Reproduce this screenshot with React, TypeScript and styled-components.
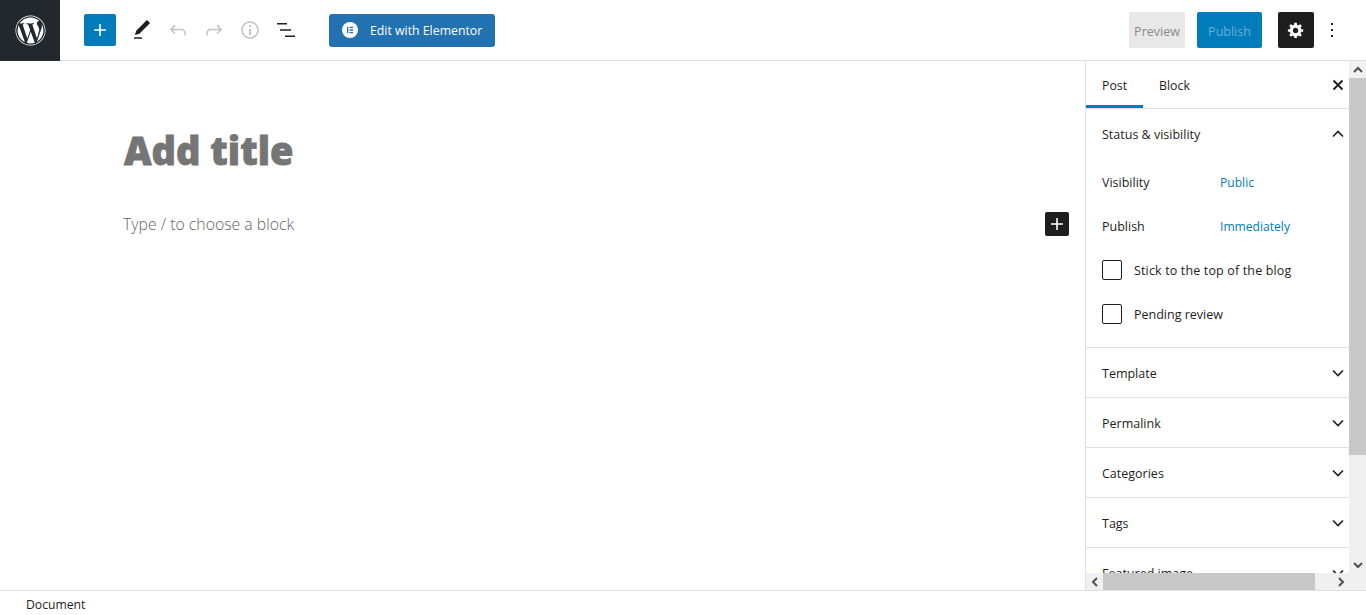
import React from "react";
import styled, { createGlobalStyle } from "styled-components";
import { FaWordpress } from "react-icons/fa";

const GlobalStyle = createGlobalStyle`
  html, body {
    margin: 0;
    height: 100%;
    overflow: hidden;
    background: #fff;
  }
  body {
    font-family: "Open Sans", "Noto Sans", sans-serif;
    font-size: 12.5px;
    color: #1e1e1e;
  }
`;

const Page = styled.div`
  display: flex;
  flex-direction: column;
  height: 615px;
`;

const Header = styled.header`
  display: flex;
  align-items: center;
  height: 60px;
  flex: none;
  border-bottom: 1px solid #e0e0e0;
`;

const LogoBox = styled.div`
  display: flex;
  align-items: center;
  justify-content: center;
  width: 60px;
  height: 61px;
  margin-bottom: -1px;
  background: #23282d;
  color: #fff;
`;

const Inserter = styled.button`
  display: flex;
  align-items: center;
  justify-content: center;
  width: 32px;
  height: 32px;
  margin: 0 8px 0 24px;
  padding: 0;
  border: 0;
  border-radius: 2px;
  background: #007cba;
  color: #fff;
`;

const ToolIcon = styled.div<{ $muted?: boolean }>`
  display: flex;
  align-items: center;
  justify-content: center;
  width: 36px;
  height: 36px;
  color: ${(p) => (p.$muted ? "#c4c4c4" : "#1e1e1e")};
`;

const ElementorButton = styled.button`
  display: flex;
  align-items: center;
  gap: 12px;
  width: 166px;
  height: 33px;
  margin-left: 25px;
  padding: 0 0 0 13px;
  border: 0;
  border-radius: 3px;
  background: #2271b1;
  color: #fff;
  font: inherit;
  font-size: 12.3px;
`;

const ElementorLabel = styled.span`
  padding-top: 1px;
`;

const HeaderRight = styled.div`
  display: flex;
  align-items: center;
  margin-left: auto;
  padding-right: 16px;
`;

const PreviewButton = styled.div`
  display: flex;
  align-items: center;
  justify-content: center;
  box-sizing: border-box;
  width: 56px;
  height: 36px;
  margin-right: 12px;
  padding-top: 2px;
  border-radius: 2px;
  background: #e8e8e8;
  color: #8a8a8a;
`;

const PublishButton = styled.div`
  display: flex;
  align-items: center;
  justify-content: center;
  box-sizing: border-box;
  width: 65px;
  height: 36px;
  margin-right: 16px;
  padding-top: 2px;
  border-radius: 2px;
  background: #007cba;
  color: #66b0d6;
`;

const SettingsButton = styled.div`
  display: flex;
  align-items: center;
  justify-content: center;
  width: 36px;
  height: 36px;
  border-radius: 2px;
  background: #1e1e1e;
  color: #fff;
`;

const Main = styled.div`
  display: flex;
  flex: none;
  height: 529px;
`;

const Editor = styled.main`
  flex: 1;
  min-width: 0;
  padding: 61px 16px 0 123px;
`;

const TitleField = styled.h1`
  margin: 0 0 0 1px;
  font-size: 38px;
  font-weight: 800;
  line-height: 56px;
  color: #757575;
  -webkit-text-stroke: 0.8px #757575;
`;

const BlockRow = styled.div`
  display: flex;
  align-items: center;
  justify-content: space-between;
  height: 24px;
  margin-top: 34px;
`;

const Placeholder = styled.p`
  margin: 0;
  font-size: 15.8px;
  font-weight: 300;
  color: #666;
`;

const BlockInserter = styled.div`
  display: flex;
  align-items: center;
  justify-content: center;
  width: 24px;
  height: 24px;
  border-radius: 2px;
  background: #1e1e1e;
  color: #fff;
`;

const Sidebar = styled.aside`
  display: grid;
  grid-template-columns: 263px 17px;
  grid-template-rows: 512px 17px;
  width: 280px;
  flex: none;
  border-left: 1px solid #e0e0e0;
  background: #f0f0f0;
`;

const Panel = styled.div`
  overflow: hidden;
  background: #fff;
`;

const Tabs = styled.div`
  display: flex;
  align-items: stretch;
  height: 47px;
  border-bottom: 1px solid #e0e0e0;
  font-size: 12.3px;
`;

const Tab = styled.div<{ $active?: boolean }>`
  display: flex;
  align-items: center;
  padding: 1px 16px 0;
  box-shadow: ${(p) => (p.$active ? "inset 0 -3px 0 #007cba" : "none")};
`;

const CloseIcon = styled.div`
  display: flex;
  align-items: center;
  margin-left: auto;
  padding-right: 3px;
`;

const Section = styled.section`
  border-bottom: 1px solid #e0e0e0;
`;

const SectionHead = styled.div`
  display: flex;
  align-items: center;
  justify-content: space-between;
  box-sizing: border-box;
  height: 49px;
  padding: 1px 3px 0 16px;
`;

const SectionBody = styled.div`
  padding: 2px 16px 11px;
`;

const Row = styled.div`
  display: flex;
  align-items: center;
  height: 44px;
`;

const RowLabel = styled.span`
  width: 118px;
`;

const RowValue = styled.span`
  color: #007cba;
  font-size: 12.1px;
`;

const CheckLabel = styled.span`
  letter-spacing: 0.15px;
`;

const CheckBox = styled.span`
  width: 18px;
  height: 18px;
  margin-right: 12px;
  border: 1px solid #1e1e1e;
  border-radius: 2px;
`;

const VTrack = styled.div`
  display: flex;
  flex-direction: column;
  align-items: center;
  background: #f0f0f0;
`;

const HTrack = styled.div`
  display: flex;
  align-items: center;
  background: #f0f0f0;
`;

const Arrow = styled.div`
  display: flex;
  align-items: center;
  justify-content: center;
  width: 17px;
  height: 17px;
  flex: none;
  color: #505050;
`;

const VThumb = styled.div`
  width: 17px;
  height: 377px;
  background: #c8c8c8;
`;

const HThumb = styled.div`
  width: 212px;
  height: 17px;
  background: #c8c8c8;
`;

const Spacer = styled.div`
  flex: 1;
`;

const Footer = styled.footer`
  display: flex;
  align-items: center;
  flex: 1;
  padding: 2px 0 0 26px;
  border-top: 1px solid #e0e0e0;
  font-size: 12.2px;
`;

const Wp = ({ d, size = 24 }: { d: string; size?: number }) => (
  <svg width={size} height={size} viewBox="0 0 24 24" fill="currentColor">
    <path d={d} />
  </svg>
);

// small stroked glyph used for chevrons, the close cross and scrollbar arrows
const Stroke = ({ d, weight = 1.6 }: { d: string; weight?: number }) => (
  <svg width="16" height="16" viewBox="0 0 16 16" fill="none" stroke="currentColor" strokeWidth={weight}>
    <path d={d} />
  </svg>
);

const PLUS = "M18 11.2h-5.2V6h-1.6v5.2H6v1.6h5.2V18h1.6v-5.2H18z";
const PEN = "M20.1 5.1L16.9 2 6.2 12.7l-1.3 4.4 4.5-1.3L20.1 5.1zM4 20.8h8v-1.5H4v1.5z";
const UNDO =
  "M18.3 11.7c-.6-.6-1.4-.9-2.3-.9H6.7l2.9-3.3-1.1-1-4.5 5L8.5 16l1-1-2.7-2.7H16c.5 0 .9.2 1.3.5 1 1 1 3.4 1 4.5v.3h1.5v-.2c0-1.5 0-4.3-1.5-5.7z";
const REDO =
  "M15.6 6.5l-1.1 1 2.9 3.3H8c-.9 0-1.7.3-2.3.9-1.4 1.5-1.4 4.2-1.4 5.6v.2h1.5v-.3c0-1.1 0-3.5 1-4.5.3-.3.7-.5 1.3-.5h9.2L14.5 15l1.1 1.1 4.6-4.6-4.6-5z";
const INFO =
  "M12 3.2c-4.8 0-8.8 3.9-8.8 8.8 0 4.8 3.9 8.8 8.8 8.8 4.8 0 8.8-3.9 8.8-8.8 0-4.8-4-8.8-8.8-8.8zm0 16c-4 0-7.2-3.3-7.2-7.2C4.8 8 8 4.8 12 4.8s7.2 3.3 7.2 7.2c0 4-3.2 7.2-7.2 7.2zM11 17h2v-6h-2v6zm0-8h2V7h-2v2z";
const LIST = "M3 5h10v1.5H3zM6 11.2h11v1.5H6zM11 17.5h10V19H11z";
const DOTS = "M13 19h-2v-2h2v2zm0-6h-2v-2h2v2zm0-6h-2V5h2v2z";

const CROSS = "M3.5 3.5l9 9M12.5 3.5l-9 9";
const UP = "M3 10.5l5-5 5 5";
const DOWN = "M3 5.5l5 5 5-5";
const SCROLL_UP = "M4 10l4-4 4 4";
const SCROLL_DOWN = "M4 6l4 4 4-4";
const SCROLL_LEFT = "M10 4L6 8l4 4";
const SCROLL_RIGHT = "M6 4l4 4-4 4";

const Gear = () => (
  <svg width="18" height="18" viewBox="0 0 20 20" fill="currentColor">
    <path
      fillRule="evenodd"
      d="M18 12h-2.18c-.17.7-.44 1.35-.81 1.93l1.54 1.54-2.1 2.1-1.54-1.54c-.58.36-1.23.63-1.91.79V19H8v-2.18c-.68-.16-1.33-.43-1.91-.79l-1.54 1.54-2.12-2.12 1.54-1.54c-.36-.58-.63-1.23-.79-1.91H1V9.03h2.17c.16-.7.44-1.35.8-1.94L2.43 5.55l2.1-2.1 1.54 1.54c.58-.37 1.24-.64 1.93-.81V2h3v2.18c.68.16 1.33.43 1.91.79l1.54-1.54 2.12 2.12-1.54 1.54c.36.59.64 1.24.8 1.94H18V12zm-8.5 1.5c1.66 0 3-1.34 3-3s-1.34-3-3-3-3 1.34-3 3 1.34 3 3 3z"
    />
  </svg>
);

const Elementor = () => (
  <svg width="16" height="16" viewBox="0 0 16 16">
    <circle cx="8" cy="8" r="8" fill="#fff" />
    <path
      fill="#2271b1"
      d="M5 4.7h1.3v6.6H5zM7.5 4.7h3.6V6H7.5zM7.5 7.3h3.6v1.4H7.5zM7.5 10h3.6v1.3H7.5z"
    />
  </svg>
);

const collapsed = ["Template", "Permalink", "Categories", "Tags", "Featured image"];

const App = () => {
  return (
    <Page>
      <GlobalStyle />
      <Header>
        <LogoBox>
          <FaWordpress size={31} />
        </LogoBox>
        <Inserter>
          <Wp d={PLUS} />
        </Inserter>
        <ToolIcon>
          <Wp d={PEN} />
        </ToolIcon>
        <ToolIcon $muted>
          <Wp d={UNDO} />
        </ToolIcon>
        <ToolIcon $muted>
          <Wp d={REDO} />
        </ToolIcon>
        <ToolIcon $muted>
          <Wp d={INFO} />
        </ToolIcon>
        <ToolIcon>
          <Wp d={LIST} />
        </ToolIcon>
        <ElementorButton>
          <Elementor />
          <ElementorLabel>Edit with Elementor</ElementorLabel>
        </ElementorButton>
        <HeaderRight>
          <PreviewButton>Preview</PreviewButton>
          <PublishButton>Publish</PublishButton>
          <SettingsButton>
            <Gear />
          </SettingsButton>
          <ToolIcon>
            <Wp d={DOTS} />
          </ToolIcon>
        </HeaderRight>
      </Header>
      <Main>
        <Editor>
          <TitleField>Add title</TitleField>
          <BlockRow>
            <Placeholder>Type / to choose a block</Placeholder>
            <BlockInserter>
              <Wp d={PLUS} />
            </BlockInserter>
          </BlockRow>
        </Editor>
        <Sidebar>
          <Panel>
            <Tabs>
              <Tab $active>Post</Tab>
              <Tab>Block</Tab>
              <CloseIcon>
                <Stroke d={CROSS} weight={1.9} />
              </CloseIcon>
            </Tabs>
            <Section>
              <SectionHead>
                Status &amp; visibility
                <Stroke d={UP} />
              </SectionHead>
              <SectionBody>
                <Row>
                  <RowLabel>Visibility</RowLabel>
                  <RowValue>Public</RowValue>
                </Row>
                <Row>
                  <RowLabel>Publish</RowLabel>
                  <RowValue>Immediately</RowValue>
                </Row>
                <Row>
                  <CheckBox />
                  <CheckLabel>Stick to the top of the blog</CheckLabel>
                </Row>
                <Row>
                  <CheckBox />
                  Pending review
                </Row>
              </SectionBody>
            </Section>
            {collapsed.map((name) => (
              <Section key={name}>
                <SectionHead>
                  {name}
                  <Stroke d={DOWN} />
                </SectionHead>
              </Section>
            ))}
          </Panel>
          <VTrack>
            <Arrow>
              <Stroke d={SCROLL_UP} weight={2} />
            </Arrow>
            <VThumb />
            <Spacer />
            <Arrow>
              <Stroke d={SCROLL_DOWN} weight={2} />
            </Arrow>
          </VTrack>
          <HTrack>
            <Arrow>
              <Stroke d={SCROLL_LEFT} weight={2} />
            </Arrow>
            <HThumb />
            <Spacer />
            <Arrow>
              <Stroke d={SCROLL_RIGHT} weight={2} />
            </Arrow>
          </HTrack>
          <VTrack />
        </Sidebar>
      </Main>
      <Footer>Document</Footer>
    </Page>
  );
};

export default App;
